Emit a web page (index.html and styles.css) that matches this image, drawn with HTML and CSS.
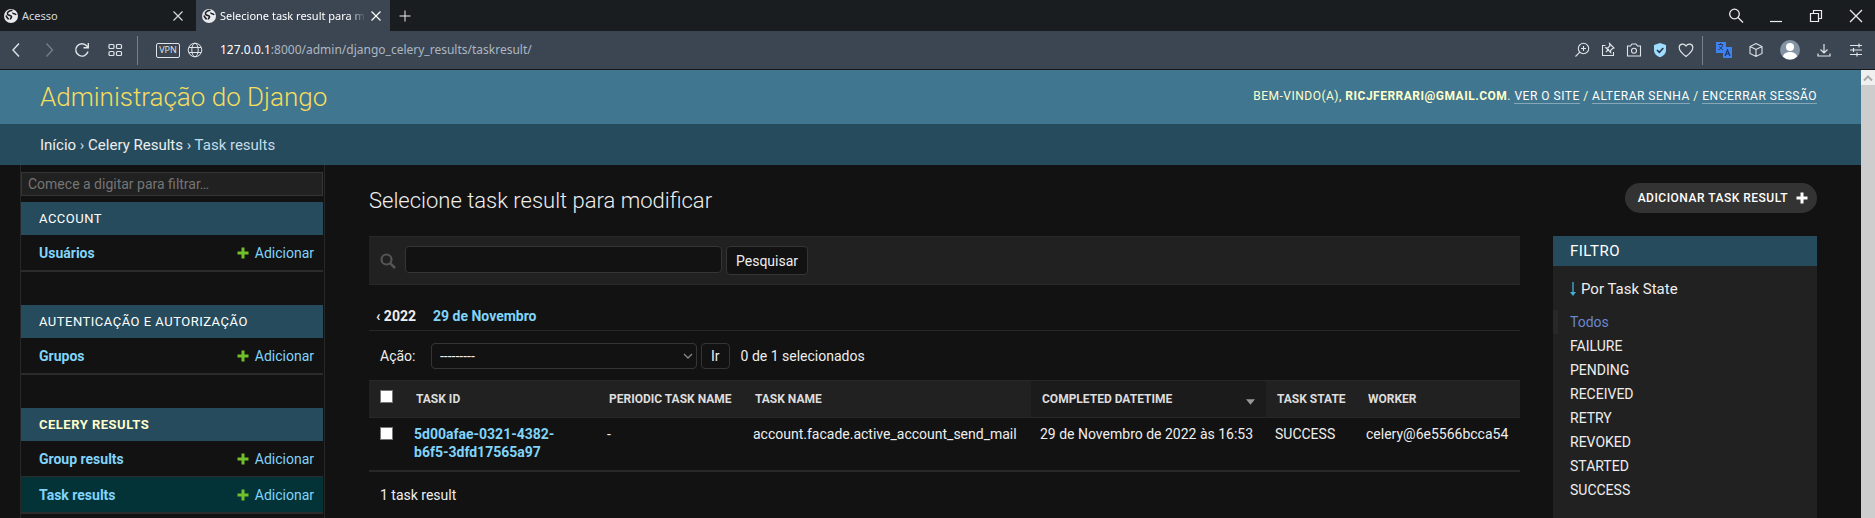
FILE: index.html
```html
<!DOCTYPE html>
<html lang="pt-br">
<head>
<meta charset="utf-8">
<title>Selecione task result para modificar</title>
<link rel="stylesheet" href="styles.css">
</head>
<body>
<svg class="defs" aria-hidden="true">
  <symbol id="earth" viewBox="0 0 14 14"><circle cx="7" cy="7" r="7" fill="#e8eaed"/><path d="M8.500 1.200C5 1.500 3 3.500 3.500 5.200 4 6.800 7 6 7.500 7.500c.4 1.200-1.500 1.600-1 3M2 6.500c.5 2 2 2.500 2.500 4M9 3.500c-.5 1.500 2.500 1 3 2.500" fill="none" stroke="#1d2126" stroke-width="1.600"/></symbol>
  <symbol id="cross" viewBox="0 0 12 12"><path d="M1.500 1.500l9 9M10.500 1.500l-9 9" fill="none" stroke="currentColor" stroke-width="1.200"/></symbol>
  <symbol id="add" viewBox="0 0 12 12"><path d="M6 .5v11M.5 6h11" fill="none" stroke="currentColor" stroke-width="3"/></symbol>
</svg>
<div class="tabs">
  <div class="tab"><svg class="i14"><use href="#earth"/></svg><span class="tab-name">Acesso</span><button class="plain" aria-label="Fechar"><svg class="i12"><use href="#cross"/></svg></button></div>
  <div class="tab active"><svg class="i14"><use href="#earth"/></svg><span class="tab-name fade">Selecione task result para m</span><button class="plain" aria-label="Fechar"><svg class="i12"><use href="#cross"/></svg></button></div>
  <button class="plain new-tab" aria-label="Nova aba"><svg class="i12" viewBox="0 0 12 12"><path d="M6 .5v11M.5 6h11" stroke="currentColor"/></svg></button>
  <div class="window-buttons">
    <button class="plain" aria-label="Buscar"><svg class="i16" viewBox="0 0 16 16" fill="none" stroke="currentColor" stroke-width="1.300"><circle cx="6.500" cy="6" r="4.800"/><path d="M10 9.500l5 5"/></svg></button>
    <button class="plain" aria-label="Minimizar"><svg class="i16" viewBox="0 0 16 16"><path d="M2 13.500h12" stroke="currentColor" stroke-width="1.200"/></svg></button>
    <button class="plain" aria-label="Restaurar"><svg class="i16" viewBox="0 0 16 16" fill="none" stroke="currentColor" stroke-width="1.200"><path d="M2.500 5.500h8v8h-8zM5.500 5.500v-3h8v8h-3"/></svg></button>
    <button class="plain" aria-label="Fechar janela"><svg class="i16" viewBox="0 0 16 16"><path d="M2 2l12 12M14 2L2 14" stroke="currentColor" stroke-width="1.300"/></svg></button>
  </div>
</div>
<div class="address">
  <div class="nav">
    <button class="plain" aria-label="Voltar"><svg class="i16" viewBox="0 0 16 16" fill="none" stroke="currentColor" stroke-width="1.400"><path d="M11 1.500L5 8l6 6.500"/></svg></button>
    <button class="plain dim" aria-label="Avançar"><svg class="i16" viewBox="0 0 16 16" fill="none" stroke="currentColor" stroke-width="1.400"><path d="M5.500 1.500l6 6.500-6 6.500"/></svg></button>
    <button class="plain" aria-label="Recarregar"><svg class="i16" viewBox="0 0 16 16" fill="none" stroke="currentColor" stroke-width="1.400"><path d="M14 9.500A6.200 6.200 0 1 1 12.800 4l1.200 1.500M14.300 1v4.800H9.500"/></svg></button>
    <button class="plain" aria-label="Speed dial"><svg class="i16" viewBox="0 0 16 16" fill="none" stroke="currentColor" stroke-width="1.200"><rect x="2" y="2.500" width="5" height="4" rx="1"/><rect x="9.500" y="2.500" width="5" height="4" rx="1"/><rect x="2" y="9.500" width="5" height="4" rx="1"/><rect x="9.500" y="9.500" width="5" height="4" rx="1"/></svg></button>
  </div>
  <span class="divider"></span>
  <button class="vpn">VPN</button>
  <svg class="i16 globe" viewBox="0 0 16 16" fill="none" stroke="currentColor"><circle cx="8" cy="8" r="6.800"/><ellipse cx="8" cy="8" rx="3.200" ry="6.800"/><path d="M2 5.500h12M2 10.500h12"/></svg>
  <span class="url"><b>127.0.0.1</b>:8000/admin/django_celery_results/taskresult/</span>
  <div class="page-tools">
    <svg class="i16" viewBox="0 0 16 16" fill="none" stroke="currentColor" stroke-width="1.100"><circle cx="9.500" cy="6.500" r="5.200"/><path d="M5.800 10.200L1.500 14.500M9.500 4v5M7 6.500h5"/></svg>
    <svg class="i16" viewBox="0 0 16 16" fill="none" stroke="currentColor" stroke-width="1.100"><path d="M5.500 3.500h-3v10h11V10M6 10l3-3M9.500 1.500l4.500 4.500-1.500.5-2 2 .2 2L5.800 5.800l2 .2 2-2z"/></svg>
    <svg class="i16" viewBox="0 0 16 16" fill="none" stroke="currentColor" stroke-width="1.100"><path d="M1.500 4h3L6 2h4l1.500 2h3v10h-13z"/><circle cx="8" cy="8.800" r="2.500"/></svg>
    <svg class="i16" viewBox="0 0 16 16"><path d="M8 1l6 2v5c0 4-3 6-6 7.200C5 14 2 12 2 8V3z" fill="#9fdcff"/><path d="M5 8l2.300 2.300L11.300 6" fill="none" stroke="#1f3242" stroke-width="1.500"/></svg>
    <svg class="i16" viewBox="0 0 16 16" fill="none" stroke="currentColor" stroke-width="1.200"><path d="M8 14.500C4 11.500 1.200 8.500 1.200 5.500 1.200 1.800 6 .800 8 4c2-3.200 6.800-2.200 6.800 1.500 0 3-2.800 6-6.800 9z"/></svg>
  </div>
  <span class="divider"></span>
  <div class="extensions">
    <svg class="i16" viewBox="0 0 16 16"><path d="M0 0h10v5h6v11H7v-5H0z" fill="#3f83f1"/><path d="M2 2.500h5M4.500 1v2M6.500 3C6 6 4 7 2 8M3 4.500l4 3.500" stroke="#27406b" fill="none"/><path d="M9 14l2.500-6L14 14M10 12h3" stroke="#1f3766" stroke-width="1.200" fill="none"/></svg>
    <svg class="i16" viewBox="0 0 16 16" fill="none" stroke="currentColor" stroke-width="1.100"><path d="M8 1.500l6 3v7l-6 3-6-3v-7zM2 4.500l6 3 6-3M8 7.500v7"/></svg>
    <svg class="i20" viewBox="0 0 20 20"><circle cx="10" cy="10" r="10" fill="#8493a3"/><circle cx="10" cy="7" r="4" fill="#fff"/><path d="M2.800 16.500C4 13 7 12 10 12s6 1 7.200 4.500A10 10 0 0 1 2.800 16.500z" fill="#fff"/></svg>
    <svg class="i16" viewBox="0 0 16 16" fill="none" stroke="currentColor" stroke-width="1.200"><path d="M8 2v8.500M4.500 7.500L8 11l3.500-3.500M2 11.500v2.500h12v-2.500"/></svg>
    <svg class="i16" viewBox="0 0 16 16" fill="none" stroke="currentColor" stroke-width="1.200"><path d="M2 3.500h12M2 8h12M2 12.500h12M11 1.500v4M5.500 6v4M9 10.500v4"/></svg>
  </div>
</div>
<div class="viewport">
  <div class="page">
    <header class="site-header">
      <a class="site-name" href="#">Administração do Django</a>
      <div class="user-tools">Bem-vindo(a), <strong>ricjferrari@gmail.com</strong>. <a href="#">Ver o site</a> / <a href="#">Alterar senha</a> / <a href="#">Encerrar sessão</a></div>
    </header>
    <nav class="breadcrumbs"><a href="#">Início</a> › <a href="#">Celery Results</a> › Task results</nav>
    <div class="body">
      <nav class="sidebar">
        <input class="nav-filter" type="search" placeholder="Comece a digitar para filtrar…" aria-label="Filtrar itens de navegação">
        <section class="app">
          <h2>Account</h2>
          <div class="model"><a class="name" href="#">Usuários</a><a href="#"><svg class="i12 plus"><use href="#add"/></svg>Adicionar</a></div>
        </section>
        <section class="app">
          <h2>Autenticação e Autorização</h2>
          <div class="model"><a class="name" href="#">Grupos</a><a href="#"><svg class="i12 plus"><use href="#add"/></svg>Adicionar</a></div>
        </section>
        <section class="app">
          <h2 class="current">Celery Results</h2>
          <div class="model"><a class="name" href="#">Group results</a><a href="#"><svg class="i12 plus"><use href="#add"/></svg>Adicionar</a></div>
          <div class="model current"><a class="name" href="#">Task results</a><a href="#"><svg class="i12 plus"><use href="#add"/></svg>Adicionar</a></div>
        </section>
      </nav>
      <main class="content">
        <div class="heading">
          <h1>Selecione task result para modificar</h1>
          <a class="add-button" href="#">Adicionar task result<svg class="i12"><use href="#add"/></svg></a>
        </div>
        <div class="columns">
          <div class="results">
            <form class="search">
              <label for="q" aria-label="Pesquisar"><svg class="i16" viewBox="0 0 16 16" fill="none" stroke="#555"><circle cx="6.500" cy="6.500" r="5" stroke-width="2.200"/><path d="M10.300 10.300l4.700 4.700" stroke-width="2.600"/></svg></label>
              <input id="q" type="text">
              <button type="button">Pesquisar</button>
            </form>
            <div class="dates"><a class="back" href="#">‹ 2022</a><a href="#">29 de Novembro</a></div>
            <div class="actions">
              <label for="action">Ação:</label>
              <span class="select"><select id="action"><option>---------</option></select><svg class="chevron" viewBox="0 0 10 6"><path d="M1 1l4 4 4-4" fill="none" stroke="#888" stroke-width="1.300"/></svg></span>
              <button type="button">Ir</button>
              <span class="counter">0 de 1 selecionados</span>
            </div>
            <table>
              <colgroup><col class="c-check"><col class="c-id"><col class="c-periodic"><col class="c-name"><col class="c-date"><col class="c-state"><col></colgroup>
              <thead><tr>
                <th class="check"><input type="checkbox" aria-label="Selecionar todos"></th><th>Task ID</th><th>Periodic Task Name</th><th>Task Name</th><th class="sorted"><span class="sort">Completed DateTime<svg class="arrow" viewBox="0 0 10 6"><path d="M0 0h10L5 6z" fill="#999"/></svg></span></th><th>Task State</th><th>Worker</th>
              </tr></thead>
              <tbody><tr>
                <td class="check"><input type="checkbox" aria-label="Selecionar resultado"></td><td class="id"><a href="#">5d00afae-0321-4382-b6f5-3dfd17565a97</a></td><td>-</td><td>account.facade.active_account_send_mail</td><td>29 de Novembro de 2022 às 16:53</td><td>SUCCESS</td><td>celery@6e5566bcca54</td>
              </tr></tbody>
            </table>
            <p class="paginator">1 task result</p>
          </div>
          <aside class="filter">
            <h2>Filtro</h2>
            <h3><svg class="down" viewBox="0 0 6 14"><path d="M3 0v12" stroke="#44b0d8" stroke-width="1.300"/><path d="M0 10h6l-3 4z" fill="#44b0d8"/></svg>Por Task State</h3>
            <ul>
              <li class="selected"><a href="#">Todos</a></li>
              <li><a href="#">FAILURE</a></li>
              <li><a href="#">PENDING</a></li>
              <li><a href="#">RECEIVED</a></li>
              <li><a href="#">RETRY</a></li>
              <li><a href="#">REVOKED</a></li>
              <li><a href="#">STARTED</a></li>
              <li><a href="#">SUCCESS</a></li>
            </ul>
          </aside>
        </div>
      </main>
    </div>
  </div>
  <div class="scrollbar"><div class="scroll-up"><svg class="scroll-arrow" viewBox="0 0 10 6"><path d="M1 5.500l4-4 4 4" fill="none" stroke="#aaa" stroke-width="2"/></svg></div></div>
</div>
</body>
</html>
```
FILE: styles.css
```css
* { box-sizing: border-box; }
body {
  margin: 0;
  height: 100vh;
  overflow: hidden;
  display: flex;
  flex-direction: column;
  background: #121212;
  color: #eee;
  font: 14px/18px Roboto, sans-serif;
}
a { color: #81d4fa; text-decoration: none; }
h1, h2, h3, p, ul { margin: 0; padding: 0; }
button, input, select { font: inherit; color: inherit; }
svg { display: block; flex: none; }
.defs { position: absolute; width: 0; height: 0; }
.i12 { width: 12px; height: 12px; }
.i14 { width: 14px; height: 14px; }
.i16 { width: 16px; height: 16px; }
.i20 { width: 20px; height: 20px; }
.plain { display: flex; padding: 0; border: 0; background: none; }

/* browser chrome */
.tabs { flex: none; display: flex; height: 31px; background: #1a1d20; font: 11px/16px "Noto Sans", sans-serif; }
.tab { display: flex; align-items: center; gap: 4px; width: 196px; padding: 0 12px 0 4px; color: #d5d9dd; }
.tab.active { width: 194px; padding: 0 8px 0 6px; background: #3b4652; color: #fff; }
.tab-name { flex: 1; min-width: 0; white-space: nowrap; }
.fade { mask-image: linear-gradient(to right, #000 88%, transparent); }
.new-tab { align-self: center; margin-left: 9px; }
.window-buttons { margin-left: auto; display: flex; align-items: center; gap: 24px; padding-right: 11px; }
.address {
  flex: none; display: flex; align-items: center; height: 39px;
  background: #3b4652; border-bottom: 1px solid #15181b; color: #dfe4e9;
}
.nav { display: flex; gap: 17px; padding: 0 14px 0 8px; }
.dim { opacity: .35; }
.divider { width: 1px; height: 29px; background: #75808b; }
.vpn { width: 24px; height: 15px; margin-left: 18px; padding: 0; border: 1px solid #dfe4e9; border-radius: 2px; background: none; font: 9px/12px "Open Sans", sans-serif; }
.globe { margin: 0 17px 0 7px; }
.url { flex: 1; font: 12px/18px "Noto Sans", sans-serif; color: #adb7c2; white-space: nowrap; }
.url b { font-weight: 400; color: #fff; }
.page-tools { display: flex; gap: 10px; padding-right: 8px; }
.extensions { display: flex; align-items: center; gap: 16px; padding: 0 11px 0 13px; }

/* admin page */
.viewport { flex: 1; min-height: 0; display: flex; }
.page { flex: 1; min-width: 0; display: flex; flex-direction: column; overflow: hidden; }
.scrollbar { width: 14px; background: #cdcdcd; }
.scroll-up { display: flex; align-items: center; justify-content: center; height: 15px; background: #f0f0f0; }
.scroll-arrow { width: 10px; height: 6px; }
.site-header { flex: none; display: flex; align-items: center; justify-content: space-between; height: 54px; padding: 0 44px 0 40px; background: #417690; color: #ffc; }
.site-name { font-size: 26px; line-height: 32px; font-weight: 300; color: #f5dd5d; }
.user-tools { padding-bottom: 2px; font-size: 12px; line-height: 16px; letter-spacing: .5px; text-transform: uppercase; }
.user-tools a { color: #fff; border-bottom: 1px solid #86a7b8; }
.breadcrumbs { flex: none; padding: 12px 40px 11px; background: #264b5d; color: #c4dce8; font-size: 15px; line-height: 18px; }
.breadcrumbs a { color: #eee; }
.body { flex: 1; display: flex; }
.sidebar { flex: none; width: 305px; margin-left: 20px; padding: 7px 1px 0 0; border: solid #272727; border-width: 0 1px; }
.nav-filter { display: block; width: 100%; height: 24px; margin-bottom: 6px; padding: 0 6px; border: 1px solid #353535; background: #212121; outline: 0; }
.nav-filter::placeholder { color: #757575; }
.app { margin-bottom: 33px; }
.app h2 { height: 33px; padding: 0 18px; background: #264b5d; color: #fff; font-size: 13px; line-height: 33px; font-weight: 400; letter-spacing: .5px; text-transform: uppercase; }
.app h2.current { color: #ffc; font-weight: 700; }
.model { display: flex; justify-content: space-between; height: 36px; padding: 0 9px 0 18px; border-bottom: 1px solid #2b2b2b; line-height: 34px; }
.app .model:last-child { height: 37px; border-bottom-width: 2px; }
.model.current { background: #033337; }
.model a { display: flex; align-items: center; gap: 6px; }
.name { font-weight: 700; }
.plus { color: #70bf2b; }

.content { flex: 1; min-width: 0; padding: 18px 44px 0 44px; }
.heading { display: flex; justify-content: space-between; align-items: flex-start; height: 53px; }
h1 { padding-top: 5px; font-size: 22px; line-height: 26px; font-weight: 300; }
.add-button { display: flex; align-items: center; gap: 8px; height: 30px; padding: 0 9px 0 13px; border-radius: 15px; background: #333; color: #fff; font-size: 12px; letter-spacing: .5px; font-weight: 500; text-transform: uppercase; }
.columns { display: flex; gap: 33px; align-items: flex-start; }
.results { flex: 1; min-width: 0; }
.search { display: flex; align-items: flex-start; height: 49px; padding: 9px 11px; background: #212121; border: solid #282828; border-width: 1px 0; }
.search label { padding: 7px 9px 0 0; }
.search input { width: 317px; height: 27px; margin-right: 4px; border: 1px solid #353535; border-radius: 4px; background: #121212; outline: 0; }
.search button, .actions button { height: 29px; padding: 0 9px; border: 1px solid #353535; border-radius: 4px; background: #121212; }
.dates { display: flex; gap: 17px; height: 46px; padding: 22px 7px 0; border-bottom: 1px solid #282828; font-weight: 700; }
.back { color: #eee; }
.actions { display: flex; align-items: center; height: 49px; padding: 0 11px; }
.actions label { width: 51px; }
.select { position: relative; width: 266px; margin-right: 4px; }
select { display: block; width: 100%; height: 26px; padding: 0 8px; appearance: none; border: 1px solid #353535; border-radius: 4px; background: #121212; }
.chevron { position: absolute; right: 4px; top: 10px; width: 10px; height: 6px; }
.actions button { height: 26px; margin-right: 11px; }
table { width: 100%; table-layout: fixed; border-collapse: collapse; border-bottom: 2px solid #282828; }
.c-check { width: 36px; }
.c-id { width: 193px; }
.c-periodic { width: 146px; }
.c-name { width: 287px; }
.c-date { width: 235px; }
.c-state { width: 91px; }
th { height: 37px; padding: 0 11px; background: #212121; border: solid #282828; border-width: 1px 0; color: #ddd; font-size: 12px; font-weight: 700; text-align: left; text-transform: uppercase; white-space: nowrap; }
th.sorted { background: #1b1b1b; }
.sort { display: flex; align-items: center; justify-content: space-between; }
.arrow { width: 9px; height: 6px; margin-top: 6px; }
td { height: 53px; padding: 7px 9px; vertical-align: top; }
td.id { padding-right: 36px; }
td.check { padding: 9px 11px; }
th.check { padding: 9px 11px; vertical-align: top; }
td a { font-weight: 700; }
input[type="checkbox"] { display: block; width: 13px; height: 13px; margin: 0; appearance: none; border: 1px solid #767676; background: #fff; }
.paginator { padding: 14px 11px; }
.filter { width: 264px; background: #212121; }
.filter h2 { padding: 1px 17px 0; background: #264b5d; font-size: 15px; line-height: 29px; font-weight: 400; letter-spacing: .5px; text-transform: uppercase; color: #fff; }
.filter h3 { display: flex; align-items: center; gap: 5px; padding: 14px 17px 12px; font-size: 15px; line-height: 18px; font-weight: 400; }
.down { width: 6px; height: 14px; }
.filter ul { padding-bottom: 60px; list-style: none; }
.filter li { padding: 3px 17px; }
.filter li.selected { padding-left: 12px; border-left: 5px solid #282828; }
.filter a { color: #eee; }
.filter .selected a { color: #6b87ce; }
```
